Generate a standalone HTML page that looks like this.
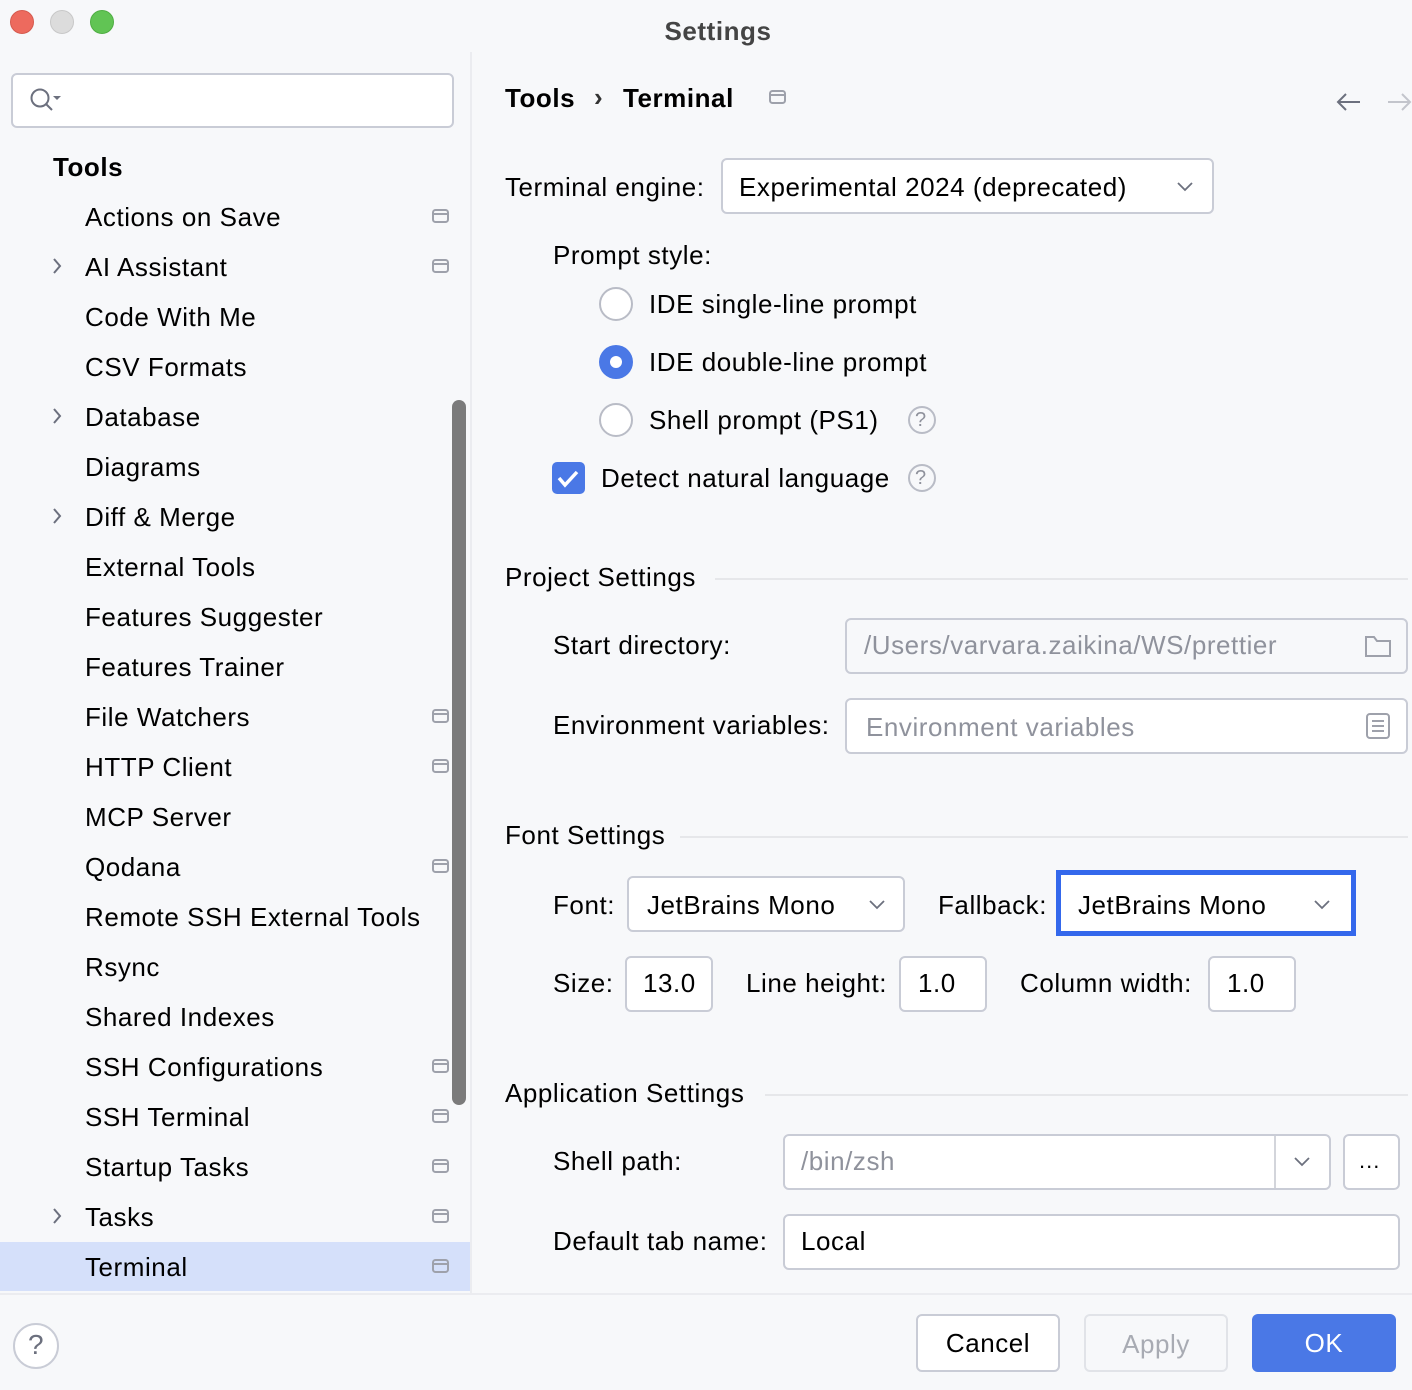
<!DOCTYPE html>
<html><head><meta charset="utf-8">
<style>
*{margin:0;padding:0;box-sizing:border-box}
html,body{width:1412px;height:1390px;overflow:hidden;background:#f7f8fa;font-family:"Liberation Sans",sans-serif;font-size:26px;color:#000;letter-spacing:0.55px}
.a{position:absolute}
.t{position:absolute;height:40px;line-height:40px;white-space:nowrap}
.box{position:absolute;background:#fff;border:2px solid #c9ccd6;border-radius:6px}
.g{color:#8f929c}
.b{font-weight:bold}
svg{position:absolute;overflow:visible}
</style></head><body>
<div class="a" style="left:10px;top:10px;width:24px;height:24px;border-radius:50%;background:#ed6a5e;border:1px solid #d55a4e"></div>
<div class="a" style="left:50px;top:10px;width:24px;height:24px;border-radius:50%;background:#dcdcdc;border:1px solid #c8c8c8"></div>
<div class="a" style="left:90px;top:10px;width:24px;height:24px;border-radius:50%;background:#61c454;border:1px solid #4fae43"></div>
<div class="t b" style="left:0;width:1436px;text-align:center;top:11px;color:#444">Settings</div>

<div class="a" style="left:470px;top:52px;width:2px;height:1242px;background:#ebecf0"></div>
<div class="box" style="left:11px;top:73px;width:443px;height:55px"></div>
<svg style="left:0;top:0" width="100" height="130"><circle cx="40" cy="98" r="8.5" fill="none" stroke="#6c707e" stroke-width="2"/><line x1="46" y1="104" x2="52" y2="110" stroke="#6c707e" stroke-width="2"/><path d="M53 96 h8 l-4 4z" fill="#6c707e"/></svg>
<div class="t b" style="left:53px;top:147px">Tools</div>
<div class="a" style="left:0;top:1242px;width:470px;height:49px;background:#d5e0fa"></div>
<div class="a" style="left:452px;top:400px;width:14px;height:705px;border-radius:7px;background:#7b7b7b"></div>

<div class="t" style="left:85px;top:197px">Actions on Save</div>
<div class="t" style="left:85px;top:247px">AI Assistant</div>
<div class="t" style="left:85px;top:297px">Code With Me</div>
<div class="t" style="left:85px;top:347px">CSV Formats</div>
<div class="t" style="left:85px;top:397px">Database</div>
<div class="t" style="left:85px;top:447px">Diagrams</div>
<div class="t" style="left:85px;top:497px">Diff &amp; Merge</div>
<div class="t" style="left:85px;top:547px">External Tools</div>
<div class="t" style="left:85px;top:597px">Features Suggester</div>
<div class="t" style="left:85px;top:647px">Features Trainer</div>
<div class="t" style="left:85px;top:697px">File Watchers</div>
<div class="t" style="left:85px;top:747px">HTTP Client</div>
<div class="t" style="left:85px;top:797px">MCP Server</div>
<div class="t" style="left:85px;top:847px">Qodana</div>
<div class="t" style="left:85px;top:897px">Remote SSH External Tools</div>
<div class="t" style="left:85px;top:947px">Rsync</div>
<div class="t" style="left:85px;top:997px">Shared Indexes</div>
<div class="t" style="left:85px;top:1047px">SSH Configurations</div>
<div class="t" style="left:85px;top:1097px">SSH Terminal</div>
<div class="t" style="left:85px;top:1147px">Startup Tasks</div>
<div class="t" style="left:85px;top:1197px">Tasks</div>
<div class="t" style="left:85px;top:1247px">Terminal</div>

<svg style="left:0;top:0" width="470" height="1300" fill="none" stroke="#8a8e9b" stroke-width="2">
<path d="M54 259 l6 7 -6 7 M54 409 l6 7 -6 7 M54 509 l6 7 -6 7 M54 1209 l6 7 -6 7" stroke="#6c707e"/>
<g stroke="#9ea1ab">
<rect x="433" y="210" width="15" height="12" rx="2.5"/><line x1="433" y1="214" x2="448" y2="214"/>
<rect x="433" y="260" width="15" height="12" rx="2.5"/><line x1="433" y1="264" x2="448" y2="264"/>
<rect x="433" y="710" width="15" height="12" rx="2.5"/><line x1="433" y1="714" x2="448" y2="714"/>
<rect x="433" y="760" width="15" height="12" rx="2.5"/><line x1="433" y1="764" x2="448" y2="764"/>
<rect x="433" y="860" width="15" height="12" rx="2.5"/><line x1="433" y1="864" x2="448" y2="864"/>
<rect x="433" y="1060" width="15" height="12" rx="2.5"/><line x1="433" y1="1064" x2="448" y2="1064"/>
<rect x="433" y="1110" width="15" height="12" rx="2.5"/><line x1="433" y1="1114" x2="448" y2="1114"/>
<rect x="433" y="1160" width="15" height="12" rx="2.5"/><line x1="433" y1="1164" x2="448" y2="1164"/>
<rect x="433" y="1210" width="15" height="12" rx="2.5"/><line x1="433" y1="1214" x2="448" y2="1214"/>
<rect x="433" y="1260" width="15" height="12" rx="2.5"/><line x1="433" y1="1264" x2="448" y2="1264"/>
<rect x="770" y="91" width="15" height="12" rx="2.5"/><line x1="770" y1="95" x2="785" y2="95"/>
</g>
</svg>

<div class="t b" style="left:505px;top:78px">Tools</div>
<div class="t b" style="left:594px;top:77px;color:#333">›</div>
<div class="t b" style="left:623px;top:78px">Terminal</div>
<svg style="left:0;top:0" width="1412" height="200" fill="none" stroke-width="2">
<path d="M1360 102 h-22 M1346 94 l-8 8 8 8" stroke="#6c707e"/>
<path d="M1388 102 h22 M1402 94 l8 8 -8 8" stroke="#c3c5cc"/>
</svg>

<div class="t" style="left:505px;top:167px">Terminal engine:</div>
<div class="box" style="left:721px;top:158px;width:493px;height:56px"></div>
<div class="t" style="left:739px;top:167px">Experimental 2024 (deprecated)</div>

<div class="t" style="left:553px;top:235px">Prompt style:</div>
<div class="a" style="left:599px;top:287px;width:34px;height:34px;border-radius:50%;background:#fff;border:2px solid #b9bcc6"></div>
<div class="a" style="left:599px;top:345px;width:34px;height:34px;border-radius:50%;background:#4a78e6"></div>
<div class="a" style="left:610px;top:356px;width:12px;height:12px;border-radius:50%;background:#fff"></div>
<div class="a" style="left:599px;top:403px;width:34px;height:34px;border-radius:50%;background:#fff;border:2px solid #b9bcc6"></div>
<div class="t" style="left:649px;top:284px">IDE single-line prompt</div>
<div class="t" style="left:649px;top:342px">IDE double-line prompt</div>
<div class="t" style="left:649px;top:400px">Shell prompt (PS1)</div>
<div class="a" style="left:552px;top:462px;width:33px;height:32px;border-radius:5px;background:#4a78e6"></div>
<div class="t" style="left:601px;top:458px">Detect natural language</div>

<svg style="left:0;top:0" width="1412" height="1390" fill="none" stroke-width="2">
<path d="M559 478 l6 7 12 -13" stroke="#fff" stroke-width="3.5"/>
<circle cx="922" cy="420" r="13" stroke="#b9bcc6"/>
<circle cx="922" cy="478" r="13" stroke="#b9bcc6"/>
<line x1="715" y1="579" x2="1408" y2="579" stroke="#e6e7ea"/>
<line x1="680" y1="837" x2="1408" y2="837" stroke="#e6e7ea"/>
<line x1="765" y1="1095" x2="1408" y2="1095" stroke="#e6e7ea"/>
</svg>
<div class="t g" style="left:915px;top:400px;font-size:20px">?</div>
<div class="t g" style="left:915px;top:458px;font-size:20px">?</div>

<div class="t" style="left:505px;top:557px">Project Settings</div>
<div class="t" style="left:553px;top:625px">Start directory:</div>
<div class="box" style="left:845px;top:618px;width:563px;height:56px;background:#f7f8fa"></div>
<div class="t g" style="left:864px;top:625px">/Users/varvara.zaikina/WS/prettier</div>
<div class="t" style="left:553px;top:705px">Environment variables:</div>
<div class="box" style="left:845px;top:698px;width:563px;height:56px"></div>
<div class="t g" style="left:866px;top:707px">Environment variables</div>
<svg style="left:0;top:0" width="1412" height="800" fill="none" stroke="#9ea1ab" stroke-width="2">
<path d="M1366 637 h8 l3 4 h13 v15 h-24z"/>
<rect x="1367" y="714" width="22" height="24" rx="3"/>
<path d="M1372 721 h12 M1372 726 h12 M1372 731 h12"/>
</svg>

<div class="t" style="left:505px;top:815px">Font Settings</div>
<div class="t" style="left:553px;top:885px">Font:</div>
<div class="box" style="left:627px;top:876px;width:278px;height:56px"></div>
<div class="t" style="left:647px;top:885px">JetBrains Mono</div>
<div class="t" style="left:938px;top:885px">Fallback:</div>
<div class="a" style="left:1056px;top:870px;width:300px;height:66px;border:5px solid #3468ec;background:#fff"></div>
<div class="t" style="left:1078px;top:885px">JetBrains Mono</div>

<div class="t" style="left:553px;top:963px">Size:</div>
<div class="box" style="left:625px;top:956px;width:88px;height:56px"></div>
<div class="t" style="left:643px;top:963px">13.0</div>
<div class="t" style="left:746px;top:963px">Line height:</div>
<div class="box" style="left:899px;top:956px;width:88px;height:56px"></div>
<div class="t" style="left:918px;top:963px">1.0</div>
<div class="t" style="left:1020px;top:963px">Column width:</div>
<div class="box" style="left:1208px;top:956px;width:88px;height:56px"></div>
<div class="t" style="left:1227px;top:963px">1.0</div>

<div class="t" style="left:505px;top:1073px">Application Settings</div>
<div class="t" style="left:553px;top:1141px">Shell path:</div>
<div class="box" style="left:783px;top:1134px;width:548px;height:56px"></div>
<div class="a" style="left:1274px;top:1136px;width:2px;height:52px;background:#d3d5db"></div>
<div class="t g" style="left:801px;top:1141px">/bin/zsh</div>
<div class="box" style="left:1343px;top:1134px;width:57px;height:56px"></div>
<div class="t" style="left:1359px;top:1141px;font-size:22px;letter-spacing:1px">...</div>
<div class="t" style="left:553px;top:1221px">Default tab name:</div>
<div class="box" style="left:783px;top:1214px;width:617px;height:56px"></div>
<div class="t" style="left:801px;top:1221px">Local</div>

<svg style="left:0;top:0" width="1412" height="1390" fill="none">
<path d="M1178 183 l7 7 7 -7 M870 901 l7 7 7 -7 M1315 901 l7 7 7 -7 M1295 1158 l7 7 7 -7" stroke="#6c707e" stroke-width="1.8"/>
</svg>

<div class="a" style="left:0;top:1293px;width:1412px;height:2px;background:#ebecf0"></div>
<div class="a" style="left:13px;top:1323px;width:46px;height:46px;border-radius:50%;border:2px solid #c9ccd6;background:#fff"></div>
<div class="t" style="left:13px;top:1325px;width:46px;text-align:center;color:#6c707e;font-size:28px">?</div>
<div class="box" style="left:916px;top:1314px;width:144px;height:58px"></div>
<div class="t" style="left:916px;top:1323px;width:144px;text-align:center">Cancel</div>
<div class="box" style="left:1084px;top:1314px;width:144px;height:58px;background:#f7f8fa;border-color:#e1e3e8"></div>
<div class="t" style="left:1084px;top:1324px;width:144px;text-align:center;color:#a8abb3">Apply</div>
<div class="a" style="left:1252px;top:1314px;width:144px;height:58px;border-radius:6px;background:#4a78e6"></div>
<div class="t" style="left:1252px;top:1323px;width:144px;text-align:center;color:#fff">OK</div>
</body></html>
